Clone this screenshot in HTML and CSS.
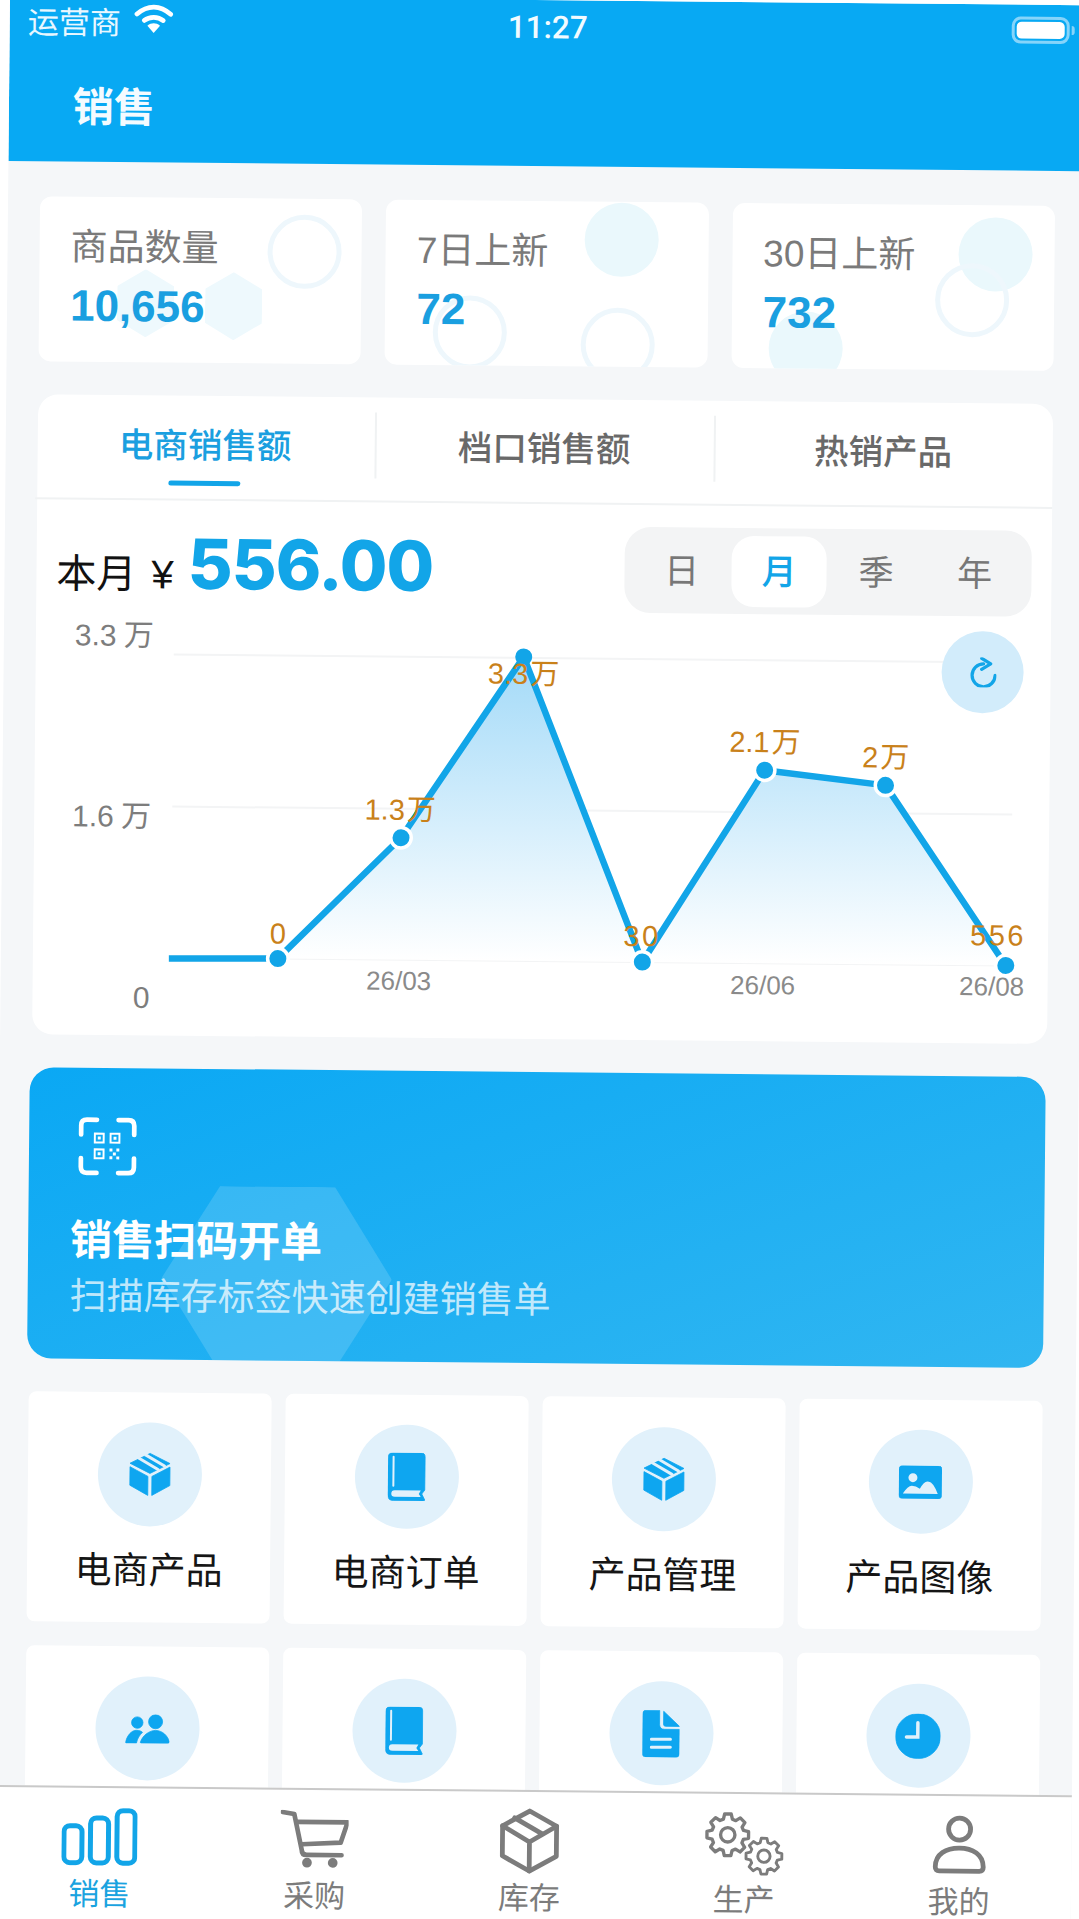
FILE: index.html
```html
<!DOCTYPE html>
<html lang="zh-CN">
<head>
<meta charset="utf-8">
<title>销售</title>
<link rel="stylesheet" href="styles.css">
</head>
<body>
<div class="screen">
  <header class="top">
    <div class="status">
      <div class="carrier">运营商
        <svg class="wifi" viewBox="0 0 38 30"><path class="wifi-arc" d="M3 11C13 2 25 2 35 11"/><path class="wifi-arc" d="M10 17C15 13 23 13 28 17"/><path class="wifi-dot" d="M19 29l-6-7c4-3 8-3 12 0z"/></svg>
      </div>
      <div class="time">11:27</div>
      <div class="battery"><span class="battery-fill"></span></div>
    </div>
    <div class="title">销售</div>
  </header>

  <section class="stats">
    <div class="stat">
      <i class="ring r1"></i><i class="hex h1"></i><i class="hex h2"></i>
      <div class="stat-label">商品数量</div><div class="stat-value">10,656</div>
    </div>
    <div class="stat">
      <i class="disc d1"></i><i class="ring r2"></i><i class="ring r3"></i>
      <div class="stat-label">7日上新</div><div class="stat-value">72</div>
    </div>
    <div class="stat">
      <i class="disc d2"></i><i class="ring r4"></i><i class="disc d3"></i>
      <div class="stat-label">30日上新</div><div class="stat-value">732</div>
    </div>
  </section>

  <section class="panel">
    <div class="tabs">
      <div class="tab tab-on">电商销售额</div>
      <div class="tab">档口销售额</div>
      <div class="tab">热销产品</div>
    </div>
    <div class="summary">
      <div class="amount-wrap"><span class="amount-label">本月</span><span class="yen">¥</span><span class="amount">556.00</span></div>
      <div class="segment">
        <span class="seg">日</span><span class="seg seg-on">月</span><span class="seg">季</span><span class="seg">年</span>
      </div>
    </div>
    <div class="chart">
      <svg class="chart-svg" viewBox="32 609 1014 430">
        <defs>
          <linearGradient id="area" x1="0" y1="0" x2="0" y2="1">
            <stop offset="0" stop-color="#a3daf8"/>
            <stop offset="1" stop-color="#ffffff"/>
          </linearGradient>
        </defs>
        <path class="grid" d="M170 658H1010M170 810H1010M277 961H1010"/>
        <path fill="url(#area)" d="M277 961L399 839L520 657L641.5 961L762 768L883 782L1005 961Z"/>
        <path class="line" d="M168 962L277 961L399 839L520 657L641.5 961L762 768L883 782L1005 961"/>
        <g class="halo"><circle cx="277" cy="961" r="12"/><circle cx="399" cy="839" r="12"/><circle cx="641.5" cy="961" r="12"/><circle cx="762" cy="768" r="12"/><circle cx="883" cy="782" r="12"/><circle cx="1005" cy="961" r="12"/></g>
        <g class="dot"><circle cx="277" cy="961" r="8.5"/><circle cx="399" cy="839" r="8.5"/><circle cx="520" cy="657" r="8.5"/><circle cx="641.5" cy="961" r="8.5"/><circle cx="762" cy="768" r="8.5"/><circle cx="883" cy="782" r="8.5"/><circle cx="1005" cy="961" r="8.5"/></g>
        <g class="y-labels">
          <text x="150" y="639">3.3 万</text><text x="149" y="820">1.6 万</text><text x="149" y="1001">0</text>
        </g>
        <g class="x-labels">
          <text x="398" y="982">26/03</text><text x="762" y="983">26/06</text><text x="991" y="982">26/08</text>
        </g>
        <g class="values">
          <text class="spaced" x="278" y="936">0</text><text x="398" y="811">1.3 万</text><text x="520" y="674">3.3 万</text><text class="spaced" x="641" y="935">30</text><text x="762" y="740">2.1 万</text><text x="883" y="754">2 万</text><text class="spaced" x="997" y="931">556</text>
        </g>
      </svg>
      <div class="refresh">
        <svg viewBox="0 0 27 30"><path d="M14 6.500A11.500 11.500 0 1 0 25.500 18"/><path d="M12 1L21 6.500L12 12"/></svg>
      </div>
    </div>
  </section>

  <section class="banner">
    <i class="banner-hex"></i>
    <svg class="scan" viewBox="0 0 60 60">
      <path class="scan-frame" d="M19 3H9Q3 3 3 9V18M41 3H51Q57 3 57 9V18M3 42V51Q3 57 9 57H19M57 42V51Q57 57 51 57H41"/>
      <path class="scan-qr" d="M17 17h9v9h-9zM33 17h9v9h-9zM17 33h9v9h-9z"/>
      <path class="scan-bit" d="M20 20h3v3h-3zM36 20h3v3h-3zM20 36h3v3h-3zM32 32h3v3h-3zM39 32h3v3h-3zM35.500 36h3v3h-3zM32 40h3v3h-3zM39 40h3v3h-3z"/>
    </svg>
    <div class="banner-title">销售扫码开单</div>
    <div class="banner-sub">扫描库存标签快速创建销售单</div>
  </section>

  <section class="modules">
    <div class="module">
      <div class="badge"><svg class="ic-box" viewBox="0 0 44 46"><path class="fill" d="M22 2L42 12L22 22L2 12Z"/><path class="cut" d="M11 7L30 18M17.500 3.500L36.500 14.500"/><path class="fill" d="M2 15.500L20 25V44L2 34ZM42 15.500L24 25V44L42 34Z"/></svg></div>
      <div class="module-name">电商产品</div>
    </div>
    <div class="module">
      <div class="badge"><svg class="ic-book" viewBox="0 0 38 48"><path class="fill" d="M5 0H33Q37 0 37 4V37L34 41L37 47Q37 48 35 48H6Q0 48 0 42V5Q0 0 5 0Z"/><path class="cut thin" d="M5.500 4V33"/><path class="pale" d="M7 37.500H33L31 41L33 44H7Q3.500 44 3.500 41Q3.500 37.500 7 37.500Z"/></svg></div>
      <div class="module-name">电商订单</div>
    </div>
    <div class="module">
      <div class="badge"><svg class="ic-box" viewBox="0 0 44 46"><path class="fill" d="M22 2L42 12L22 22L2 12Z"/><path class="cut" d="M11 7L30 18M17.500 3.500L36.500 14.500"/><path class="fill" d="M2 15.500L20 25V44L2 34ZM42 15.500L24 25V44L42 34Z"/></svg></div>
      <div class="module-name">产品管理</div>
    </div>
    <div class="module">
      <div class="badge"><svg class="ic-img" viewBox="0 0 43 33"><rect class="fill" width="43" height="33" rx="4"/><circle class="pale" cx="14" cy="12" r="4.500"/><path class="pale" d="M4 28Q9 20 13 20Q17 20 21 23Q26 14 30 16Q34 16 39 28Z"/></svg></div>
      <div class="module-name">产品图像</div>
    </div>
    <div class="module">
      <div class="badge"><svg class="ic-people" viewBox="0 0 44 29"><circle class="fill" cx="11.700" cy="8.300" r="5.700"/><circle class="fill" cx="30" cy="7.300" r="7"/><path class="fill" d="M0 28C2 21 6 16 11 16C14 16 16 17 17 18C14 21 12 24 11 29H1Q0 29 0 28ZM15 28C17 21 24 16 30 16C37 16 42 21 44 27Q44 29 42 29H16Q15 29 15 28Z"/></svg></div>
      <div class="module-name">客户管理</div>
    </div>
    <div class="module">
      <div class="badge"><svg class="ic-book" viewBox="0 0 38 48"><path class="fill" d="M5 0H33Q37 0 37 4V37L34 41L37 47Q37 48 35 48H6Q0 48 0 42V5Q0 0 5 0Z"/><path class="cut thin" d="M5.500 4V33"/><path class="pale" d="M7 37.500H33L31 41L33 44H7Q3.500 44 3.500 41Q3.500 37.500 7 37.500Z"/></svg></div>
      <div class="module-name">销售订单</div>
    </div>
    <div class="module">
      <div class="badge"><svg class="ic-doc" viewBox="0 0 37 47"><path class="fill" d="M4 0H17V14Q17 19 22 19H37V43Q37 47 33 47H4Q0 47 0 43V4Q0 0 4 0Z"/><path class="fill" d="M21 1L37 16H23Q21 16 21 14Z"/><path class="cut" d="M9 29H28M9 37H28"/></svg></div>
      <div class="module-name">销售单据</div>
    </div>
    <div class="module">
      <div class="badge"><svg class="ic-clock" viewBox="0 0 45 45"><circle class="fill" cx="22.500" cy="22.500" r="22.500"/><path class="cut wide" d="M22.300 9V23.300H11"/></svg></div>
      <div class="module-name">销售记录</div>
    </div>
  </section>

  <nav class="tabbar">
    <div class="nav nav-on">
      <svg class="bars" viewBox="0 0 76 58"><rect x="2.500" y="18" width="18" height="37" rx="6"/><rect x="29" y="10" width="18" height="45" rx="6"/><rect x="55.500" y="2.500" width="18" height="52.500" rx="6"/></svg>
      <span>销售</span>
    </div>
    <div class="nav">
      <svg class="stroke cart" viewBox="0 0 70 60"><path d="M2 2L14 4L22 41Q22 46 27 46H63"/><path d="M17 12H69L62 33L22 35"/><circle class="solid" cx="27.500" cy="54" r="5"/><circle class="solid" cx="54" cy="54" r="5"/></svg>
      <span>采购</span>
    </div>
    <div class="nav">
      <svg class="stroke crate" viewBox="0 0 60 66"><path d="M30 3L57 18V48L30 63L3 48V18Z"/><path d="M3 18L30 34L57 18M30 34V63M15 10L43 26"/></svg>
      <span>库存</span>
    </div>
    <div class="nav">
      <svg class="stroke gears thin-stroke" viewBox="0 0 84 70">
        <g transform="translate(25 26)"><polygon points="16.340,-4.690 21.730,-3.440 21.730,3.440 16.340,4.690 14.870,8.240 17.800,12.930 12.930,17.800 8.240,14.870 4.690,16.340 3.440,21.730 -3.440,21.730 -4.690,16.340 -8.240,14.870 -12.930,17.800 -17.800,12.930 -14.870,8.240 -16.340,4.690 -21.730,3.440 -21.730,-3.440 -16.340,-4.690 -14.870,-8.240 -17.800,-12.930 -12.930,-17.800 -8.240,-14.870 -4.690,-16.340 -3.440,-21.730 3.440,-21.730 4.690,-16.340 8.240,-14.870 12.930,-17.800 17.800,-12.930 14.870,-8.240"/><circle r="7.500"/></g>
        <g transform="translate(63 48) scale(.86)"><polygon points="16.340,-4.690 21.730,-3.440 21.730,3.440 16.340,4.690 14.870,8.240 17.800,12.930 12.930,17.800 8.240,14.870 4.690,16.340 3.440,21.730 -3.440,21.730 -4.690,16.340 -8.240,14.870 -12.930,17.800 -17.800,12.930 -14.870,8.240 -16.340,4.690 -21.730,3.440 -21.730,-3.440 -16.340,-4.690 -14.870,-8.240 -17.800,-12.930 -12.930,-17.800 -8.240,-14.870 -4.690,-16.340 -3.440,-21.730 3.440,-21.730 4.690,-16.340 8.240,-14.870 12.930,-17.800 17.800,-12.930 14.870,-8.240"/><circle r="7.500"/></g>
      </svg>
      <span>生产</span>
    </div>
    <div class="nav">
      <svg class="stroke person" viewBox="0 0 54 60"><circle cx="27" cy="14" r="11"/><path d="M3 52C3 39 14 33 27 33C40 33 51 39 51 52Q51 56 47 56H7Q3 56 3 52Z"/></svg>
      <span>我的</span>
    </div>
  </nav>
</div>
</body>
</html>
```
FILE: styles.css
```css
* { box-sizing: border-box; margin: 0; padding: 0; }
html, body {
  width: 1079px;
  height: 1919px;
  overflow: hidden;
  background: #ffffff;
}
body {
  font-family: "Liberation Sans", "Noto Sans CJK SC", sans-serif;
}
i { display: block; }

/* the photographed screen sits slightly turned inside the frame */
.screen {
  position: relative;
  width: 1079px;
  height: 1990px;
  overflow: hidden;
  background: #f5f7f9;
  transform-origin: 0 0;
  transform: translate(10px, -5px) rotate(0.545deg);
}

/* header */
.top {
  height: 166px;
  background: #08a9f3;
  color: #fff;
}
.status {
  height: 54px;
  display: grid;
  grid-template-columns: 1fr auto 1fr;
  align-items: center;
  padding: 0 19px 0 18px;
}
.carrier {
  display: flex;
  align-items: center;
  gap: 13px;
  margin-bottom: 5px;
  font-size: 31px;
  color: #e9f7ff;
}
.wifi { width: 40px; height: 32px; margin-top: -6px; }
.wifi-arc { fill: none; stroke: #fff; stroke-width: 4.5; stroke-linecap: round; }
.wifi-dot { fill: #fff; }
.time {
  margin-right: 2px;
  font-family: Roboto, "Liberation Sans", sans-serif;
  font-size: 31.500px;
  font-weight: 500;
  color: #f2fbff;
}
.battery {
  position: relative;
  justify-self: end;
  width: 58px;
  height: 27px;
  margin-bottom: 3px;
  padding: 2px;
  border: 3px solid #86d4fa;
  border-radius: 9px;
}
.battery::after {
  content: "";
  position: absolute;
  right: -8px;
  top: 6px;
  width: 3px;
  height: 9px;
  border-radius: 0 3px 3px 0;
  background: #86d4fa;
}
.battery-fill { display: block; height: 100%; background: #fff; border-radius: 5px; }
.title {
  height: 112px;
  display: flex;
  align-items: center;
  padding: 0 0 4px 64px;
  font-size: 41px;
  font-weight: 700;
  color: #f4fbff;
}

/* stat cards */
.stats {
  display: flex;
  gap: 24px;
  padding: 35px 32px 0;
}
.stat {
  position: relative;
  flex: 1;
  height: 165px;
  padding: 29px 0 0 31px;
  background: #fff;
  border-radius: 12px;
  overflow: hidden;
}
.stat-label, .stat-value { position: relative; }
.stat-label { font-size: 37px; line-height: 44px; color: #7a7a7a; }
.stat-value { margin-top: 8px; font-size: 44px; line-height: 56px; font-weight: 700; color: #1a9fe0; }
.ring, .disc, .hex { position: absolute; }
.ring { width: 74px; height: 74px; border: 5px solid #eef7fc; border-radius: 50%; }
.disc { width: 74px; height: 74px; background: #eaf8fc; border-radius: 50%; }
.hex {
  width: 57px;
  height: 68px;
  background: #eef9fd;
  clip-path: polygon(50% 0, 100% 25%, 100% 75%, 50% 100%, 0 75%, 0 25%);
}
.r1 { left: 228px; top: 16px; }
.h1 { left: 78px; top: 72px; }
.h2 { left: 166px; top: 74px; }
.d1 { left: 199px; top: 1px; }
.r2 { left: 48px; top: 95px; }
.r3 { left: 196px; top: 106px; }
.d2 { left: 226px; top: 12px; }
.r4 { left: 203px; top: 58px; }
.d3 { left: 37px; top: 108px; }

/* sales panel */
.panel {
  height: 640px;
  margin: 33px 32px 0;
  background: #fff;
  border-radius: 20px;
}
.tabs {
  display: grid;
  grid-template-columns: repeat(3, 1fr);
  height: 105px;
  margin-left: -2px;
  border-bottom: 2px solid #f0f2f3;
}
.tab {
  display: flex;
  justify-content: center;
  align-items: center;
  position: relative;
  height: 98px;
  padding-bottom: 4px;
  font-size: 34.500px;
  font-weight: 500;
  color: #696969;
}
.tab + .tab::before {
  content: "";
  position: absolute;
  left: 0;
  top: 15px;
  height: 66px;
  width: 2px;
  background: #f0f2f3;
}
.tab-on { color: #1a9fe0; }
.tab-on::after {
  content: "";
  position: absolute;
  left: 133px;
  top: 85px;
  width: 72px;
  height: 5px;
  border-radius: 3px;
  background: #12a5e8;
}
.summary {
  display: flex;
  justify-content: space-between;
  align-items: flex-start;
  padding: 22px 20px 0 20px;
  height: 105px;
}
.amount-wrap {
  display: flex;
  align-items: baseline;
  height: 81px;
  line-height: 81px;
  margin-top: 1px;
}
.amount-label { font-size: 40px; color: #111; }
.yen { margin-left: 15px; font-size: 40px; color: #111; }
.amount {
  margin-left: 14px;
  font-family: Inter, "Liberation Sans", sans-serif;
  font-size: 69px;
  font-weight: 800;
  color: #12a5e8;
  letter-spacing: -1px;
}
.segment {
  display: grid;
  grid-template-columns: 100px 95px 99px 98px;
  align-items: center;
  column-gap: 0;
  width: 407px;
  height: 86px;
  padding-left: 7px;
  background: #f3f4f5;
  border-radius: 26px;
}
.seg {
  display: flex;
  justify-content: center;
  align-items: center;
  height: 71px;
  padding-bottom: 6px;
  font-size: 35px;
  color: #777;
  border-radius: 22px;
}
.seg-on { background: #fff; color: #12a5e8; font-weight: 500; }

/* chart */
.chart {
  position: relative;
  height: 430px;
}
.chart-svg { display: block; width: 1014px; height: 430px; }
.grid { fill: none; stroke: #f3f4f5; stroke-width: 2; }
.line { fill: none; stroke: #12a5e8; stroke-width: 6.5; stroke-linejoin: round; }
.halo circle { fill: #fff; }
.dot circle { fill: #12a5e8; }
.y-labels text {
  font-size: 30px;
  fill: #7d7d7d;
  word-spacing: -1px;
  text-anchor: end;
  dominant-baseline: central;
}
.x-labels text {
  font-size: 26px;
  fill: #8a8a8a;
  text-anchor: middle;
  dominant-baseline: central;
}
.values text {
  font-size: 29px;
  fill: #c9811a;
  word-spacing: -6px;
  text-anchor: middle;
  dominant-baseline: central;
}
.values .spaced { letter-spacing: 2.500px; }
.refresh {
  position: absolute;
  left: 906px;
  top: 18px;
  width: 82px;
  height: 82px;
  display: flex;
  justify-content: center;
  align-items: center;
  border-radius: 50%;
  background: #d2ecfb;
}
.refresh svg { width: 27px; height: 30px; }
.refresh path { fill: none; stroke: #12a5e8; stroke-width: 3.2; stroke-linecap: round; stroke-linejoin: round; }

/* banner */
.banner {
  position: relative;
  height: 291px;
  margin: 33px 33px 0 30px;
  padding: 49px 0 0 49px;
  overflow: hidden;
  border-radius: 24px;
  background: linear-gradient(160deg, #0aa8f4 0%, #31b6f1 100%);
  color: #fff;
}
.banner-hex {
  position: absolute;
  left: 134px;
  top: 117px;
  width: 230px;
  height: 184px;
  background: rgba(255, 255, 255, .15);
  clip-path: polygon(25% 0, 75% 0, 100% 50%, 75% 100%, 25% 100%, 0 50%);
}
.scan { position: relative; display: block; width: 59px; height: 59px; }
.scan-frame { fill: none; stroke: #fff; stroke-width: 4.8; stroke-linecap: round; }
.scan-qr { fill: none; stroke: #fff; stroke-width: 2; }
.scan-bit { fill: #fff; }
.banner-title {
  position: relative;
  margin-top: 38px;
  margin-left: -7px;
  font-size: 42px;
  line-height: 54px;
  font-weight: 700;
}
.banner-sub {
  position: relative;
  margin-top: 4px;
  margin-left: -7px;
  font-size: 37px;
  line-height: 50px;
  color: rgba(255, 255, 255, .72);
}

/* module grid */
.modules {
  display: grid;
  grid-template-columns: repeat(4, 243px);
  grid-auto-rows: 230px;
  gap: 24px 14px;
  margin-top: 33px;
  padding-left: 32px;
}
.module {
  display: flex;
  flex-direction: column;
  align-items: center;
  padding-top: 30px;
  background: #fff;
  border-radius: 8px;
}
.badge {
  display: flex;
  justify-content: center;
  align-items: center;
  width: 104px;
  height: 104px;
  border-radius: 50%;
  background: #e1f1fb;
}
.module-name {
  margin-top: 23px;
  font-size: 37px;
  line-height: 44px;
  color: #151515;
}
.fill { fill: #0ea6f0; stroke: #0ea6f0; stroke-width: .8; stroke-linejoin: round; }
.pale { fill: #e1f1fb; }
.cut { fill: none; stroke: #e1f1fb; stroke-width: 3; stroke-linecap: round; }
.thin { stroke-width: 2; }
.wide { stroke-width: 3.5; }
.ic-box { width: 44px; height: 46px; }
.ic-book { width: 38px; height: 48px; }
.ic-img { width: 43px; height: 33px; }
.ic-people { width: 44px; height: 29px; }
.ic-doc { width: 37px; height: 47px; }
.ic-clock { width: 45px; height: 45px; }

/* tab bar */
.tabbar {
  position: absolute;
  left: 0;
  top: 1790px;
  width: 1079px;
  height: 200px;
  display: grid;
  grid-template-columns: repeat(5, 1fr);
  padding: 16px 5px 0 0;
  background: #fff;
  border-top: 2px solid #c9c9c9;
}
.nav {
  display: grid;
  grid-template-rows: 66px auto;
  justify-items: center;
  align-items: center;
  align-content: start;
  font-size: 31px;
  line-height: 40px;
  color: #7c7c7c;
}
.nav span { margin-top: 5px; }
.nav-on { color: #1aa3e0; }
.bars { width: 76px; height: 58px; }
.cart { width: 68px; height: 59px; }
.crate { width: 60px; height: 66px; }
.gears { width: 81px; height: 67px; }
.person { width: 54px; height: 60px; }
.bars rect { fill: none; stroke: #12a5e8; stroke-width: 5; }
.stroke path, .stroke circle, .stroke polygon {
  fill: none;
  stroke: #7c7c7c;
  stroke-width: 4.8;
  stroke-linejoin: round;
  stroke-linecap: round;
}
.thin-stroke polygon, .thin-stroke circle { stroke-width: 3.5; }
.stroke .solid { fill: #7c7c7c; stroke: none; }
```
